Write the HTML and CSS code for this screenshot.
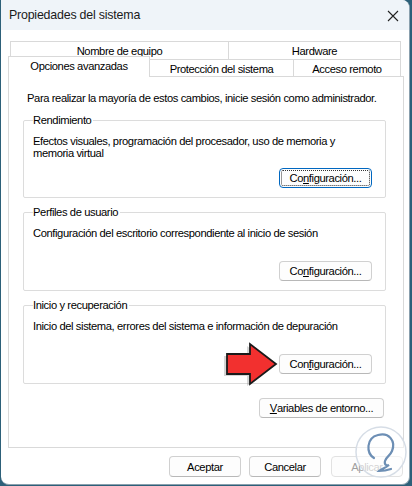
FILE: index.html
```html
<!DOCTYPE html>
<html>
	<head>
		<meta http-equiv="Content-Type" content="text/html; charset=utf-8" />
		<title>Propiedades del sistema</title>
		<link rel="stylesheet" href="styles.css">
	</head>
	<body>
		<div class="window">
			<div class="titlebar">
				<span class="title">Propiedades del sistema</span>
				<svg class="close" width="12" height="12" viewBox="0 0 12 12"><path d="M1 1 L11 11 M11 1 L1 11" stroke="#222" stroke-width="1.1" fill="none"/></svg>
			</div>
			<div class="tabs">
				<div class="tabrow row1">
					<div class="tab t-nombre">Nombre de equipo</div>
					<div class="tab t-hardware">Hardware</div>
				</div>
				<div class="tabrow row2">
					<div class="tab active t-opciones">Opciones avanzadas</div>
					<div class="tab t-proteccion">Protección del sistema</div>
					<div class="tab t-acceso">Acceso remoto</div>
				</div>
			</div>
			<div class="panel">
				<p class="intro">Para realizar la mayoría de estos cambios, inicie sesión como administrador.</p>
				<div class="group g1">
					<div class="legend">Rendimiento</div>
					<div class="desc">Efectos visuales, programación del procesador, uso de memoria y<br>memoria virtual</div>
					<div class="btn focus">Co<u>n</u>figuración...</div>
				</div>
				<div class="group">
					<div class="legend">Perfiles de usuario</div>
					<div class="desc">Configuración del escritorio correspondiente al inicio de sesión</div>
					<div class="btn">Co<u>n</u>figuración...</div>
				</div>
				<div class="group">
					<div class="legend">Inicio y recuperación</div>
					<div class="desc">Inicio del sistema, errores del sistema e información de depuración</div>
					<div class="btnline">
						<svg class="arrow" width="58" height="44" viewBox="0 0 58 44">
							<path d="M6 12 H29 V2 L55 22 L29 42 V32 H6 Z" fill="#888" opacity="0.35" transform="translate(-3,2)"/>
							<path d="M6 12 H29 V2 L55 22 L29 42 V32 H6 Z" fill="#f2302f" stroke="#1a1a1a" stroke-width="1.8" stroke-linejoin="miter"/>
						</svg>
						<div class="btn">Con<u>f</u>iguración...</div>
					</div>
				</div>
				<div class="btn envbtn"><u>V</u>ariables de entorno...</div>
			</div>
			<div class="footer">
				<div class="btn fbtn">Aceptar</div>
				<div class="btn fbtn">Cancelar</div>
				<div class="btn fbtn disabled">Aplicar</div>
			</div>
			<svg class="watermark" width="54" height="54" viewBox="0 0 54 54">
				<circle cx="27" cy="27" r="25" fill="#ffffff" fill-opacity="0.55" stroke="#d6dde6" stroke-width="1.5"/>
				<path d="M20 33 C12 28 12 13 24 10 C35 7 42 16 38 26 C36 31 32 32 31 36 C30 40 33 41 35 40 C30 44 27 44 25 46 C29 46 34 45 37 44" fill="none" stroke="#6d8fb5" stroke-width="2.2" stroke-linecap="round"/>
			</svg>
		</div>
	</body>
</html>
```

FILE: styles.css
```css
body {margin:0;background:#2d6079;font-family:"Liberation Sans", Arial, sans-serif;font-size:11.2px;letter-spacing:-0.4px;color:#000;}
.window {position:relative;width:408px;height:484px;margin-left:1px;background:#fff;border-radius:0 8px 8px 8px;overflow:hidden;display:flex;flex-direction:column;border-right:1px solid #8aa0ae;border-bottom:1px solid #8aa0ae;}
.titlebar {height:30px;background:#eff4f9;display:flex;align-items:center;justify-content:space-between;padding:0 10px 0 8px;}
.title {font-size:12.4px;letter-spacing:-0.2px;color:#1a1a1a;}
.close {margin-top:1px;}
.tabs {margin-top:11px;}
.tabrow {display:flex;height:17px;}
.row1 {padding-left:9px;height:18px;}
.row2 {padding-left:7px;}
.tab {box-sizing:border-box;border:1px solid #d9d9d9;border-bottom:none;display:flex;align-items:center;justify-content:center;background:#fff;}
.t-nombre {width:218px;border-right:none;}
.t-hardware {width:173px;}
.t-opciones {width:142px;height:21px;margin-top:-3px;position:relative;z-index:1;padding-bottom:2px;}
.t-proteccion {width:143px;border-left:none;border-right:none;padding-top:1px;}
.t-acceso {width:108px;padding-top:1px;}
.panel {box-sizing:border-box;width:396px;height:372px;margin-left:7px;border:1px solid #d9d9d9;display:flex;flex-direction:column;}
.intro {margin:15px 0 0 18px;line-height:12px;white-space:nowrap;}
.group {box-sizing:border-box;height:79px;margin:16px 17px 0 14px;border:1px solid #dcdcdc;border-radius:2px;padding:0 13px 9px 9px;display:flex;flex-direction:column;}
.g1 {height:78px;}
.group + .group {margin-top:14px;}
.legend {align-self:flex-start;margin-top:-8px;line-height:14px;padding:0 2px 0 0;background:#fff;}
.desc {margin-top:8px;line-height:12px;white-space:nowrap;}
.btn {box-sizing:border-box;height:20px;border:1px solid #d0d0d0;border-bottom-color:#b8b8b8;border-radius:4px;background:#fdfdfd;display:flex;align-items:center;justify-content:center;}
.group .btn {width:93px;margin-top:auto;align-self:flex-end;}
.btn.focus {border:1px solid #0067c0;outline:1px dotted #333;outline-offset:-3px;}
.btnline {margin-top:auto;display:flex;align-items:flex-end;justify-content:flex-end;}
.btnline .btn {margin-top:0;}
.arrow {margin:0 0 -12px 0;}
.envbtn {width:125px;align-self:flex-end;margin:14px 19px 0 0;}
.footer {display:flex;justify-content:flex-end;padding:8px 6px 0 0;}
.fbtn {width:72px;height:21px;margin-left:8px;}
.fbtn.disabled {color:#a0a0a0;border-color:#e2e2e2;margin-left:10px;}
.watermark {position:absolute;right:1px;bottom:5px;}
```
